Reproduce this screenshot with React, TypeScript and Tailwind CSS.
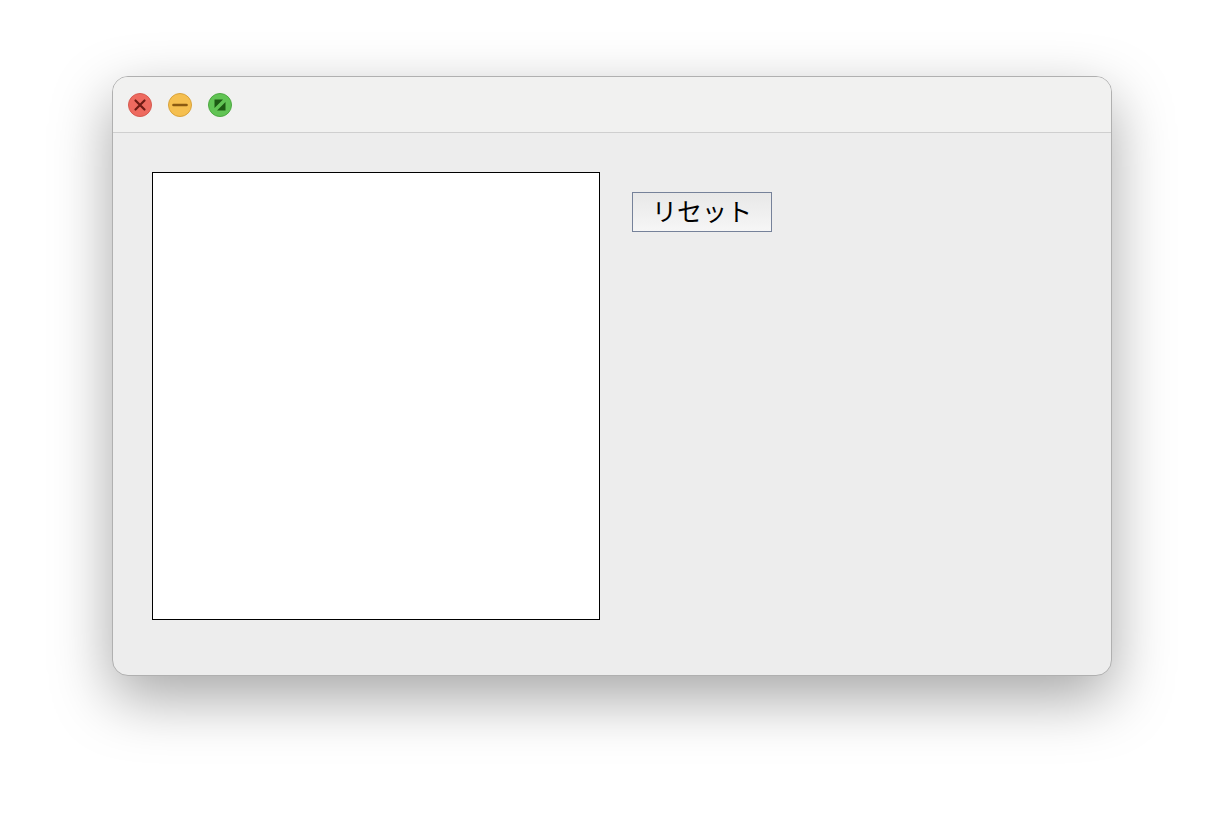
export default function App() {
  return (
    <div className="w-[1224px] h-[824px] bg-white pt-[76px] pl-[112px]">
      <div className="w-[1000px] h-[600px] rounded-[16px] border border-[#b0b0b0] bg-[#ededed] overflow-hidden shadow-[0_22px_60px_rgba(0,0,0,0.35)] flex flex-col">
        {/* Title bar */}
        <div className="h-[56px] shrink-0 bg-[#f1f1f0] border-b border-[#cfcfcf] flex items-center gap-4 pl-[15px]">
          <div className="w-6 h-6 rounded-full bg-[#ee6a5f] border border-[#d65a50] flex items-center justify-center">
            <svg width="14" height="14" viewBox="0 0 14 14">
              <path d="M2.5 2.5 L11.5 11.5 M11.5 2.5 L2.5 11.5" stroke="#6e1b14" strokeWidth="2.2" strokeLinecap="round" />
            </svg>
          </div>
          <div className="w-6 h-6 rounded-full bg-[#f5bf4f] border border-[#d9a33c] flex items-center justify-center">
            <svg width="16" height="4" viewBox="0 0 16 4">
              <path d="M1.5 2 L14.5 2" stroke="#8a5a12" strokeWidth="2.6" strokeLinecap="round" />
            </svg>
          </div>
          <div className="w-6 h-6 rounded-full bg-[#61c454] border border-[#4ea942] flex items-center justify-center">
            <svg width="14" height="14" viewBox="0 0 14 14">
              <path d="M1.5 1.5 L10 1.5 L1.5 10 Z M12.5 4 L12.5 12.5 L4 12.5 Z" fill="#1c5a13" />
            </svg>
          </div>
        </div>
        {/* Body */}
        <div className="flex items-start pl-[39px] pt-[39px] gap-8">
          <div className="w-[448px] h-[448px] bg-white border border-black shrink-0" />
          <button className="mt-5 w-[140px] h-[40px] pb-[3px] border-[1.5px] border-[#76829a] bg-gradient-to-b from-[#e8e8e8] to-[#f6f6f6] text-[25px] leading-none text-black font-['Noto_Sans_CJK_JP',sans-serif]">
            リセット
          </button>
        </div>
      </div>
    </div>
  );
}
